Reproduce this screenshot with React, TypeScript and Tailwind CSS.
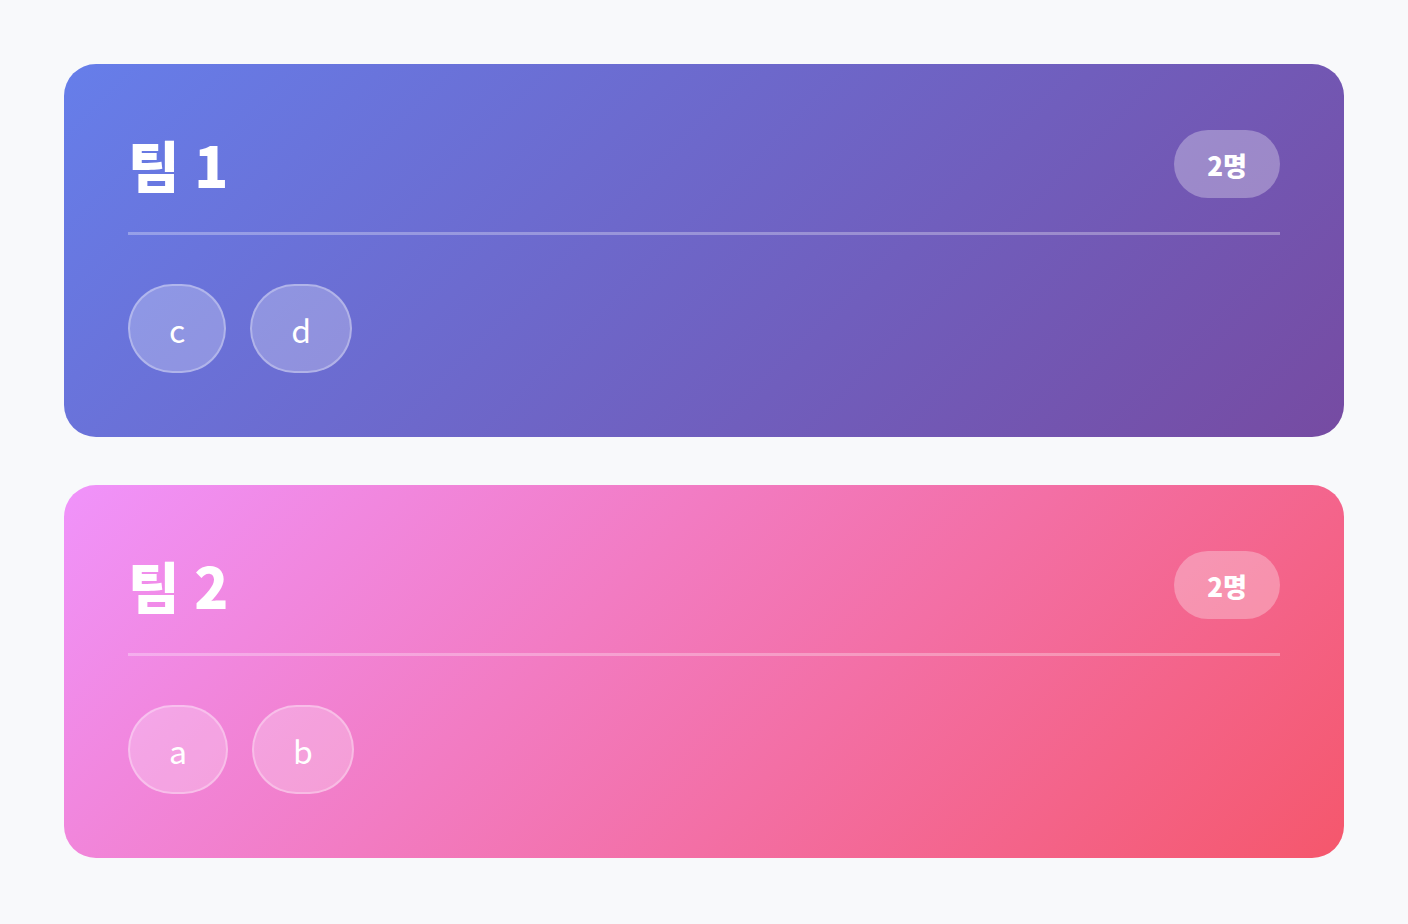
import React from "react";

const teams = [
  {
    name: "팀 1",
    members: ["c", "d"],
    bg: "bg-[linear-gradient(135deg,#667eea_0%,#764ba2_100%)]",
  },
  {
    name: "팀 2",
    members: ["a", "b"],
    bg: "bg-[linear-gradient(135deg,#f093fb_0%,#f5576c_100%)]",
  },
];

const App = () => {
  return (
    <div className="min-h-screen bg-[#f8f9fb] p-16 font-['Noto_Sans_CJK_KR',sans-serif]">
      <div className="flex flex-col gap-12">
        {teams.map((team) => (
          <section key={team.name} className={`${team.bg} rounded-[32px] p-16 text-white`}>
            <div className="flex items-center justify-between h-[72px] box-content pb-8 border-b-[3px] border-white/30">
              <h2 className="text-[56px] leading-none font-black tracking-[1px]">{team.name}</h2>
              <span className="rounded-full bg-white/30 px-[33px] h-[68px] flex items-center text-[26px] font-black">
                {team.members.length}명
              </span>
            </div>
            <div className="mt-[49px] flex gap-6">
              {team.members.map((m) => (
                <div
                  key={m}
                  className="h-[89px] px-[39px] flex items-center justify-center rounded-full bg-white/25 border-2 border-white/30 text-[32px] leading-none"
                >
                  {m}
                </div>
              ))}
            </div>
          </section>
        ))}
      </div>
    </div>
  );
};

export default App;
